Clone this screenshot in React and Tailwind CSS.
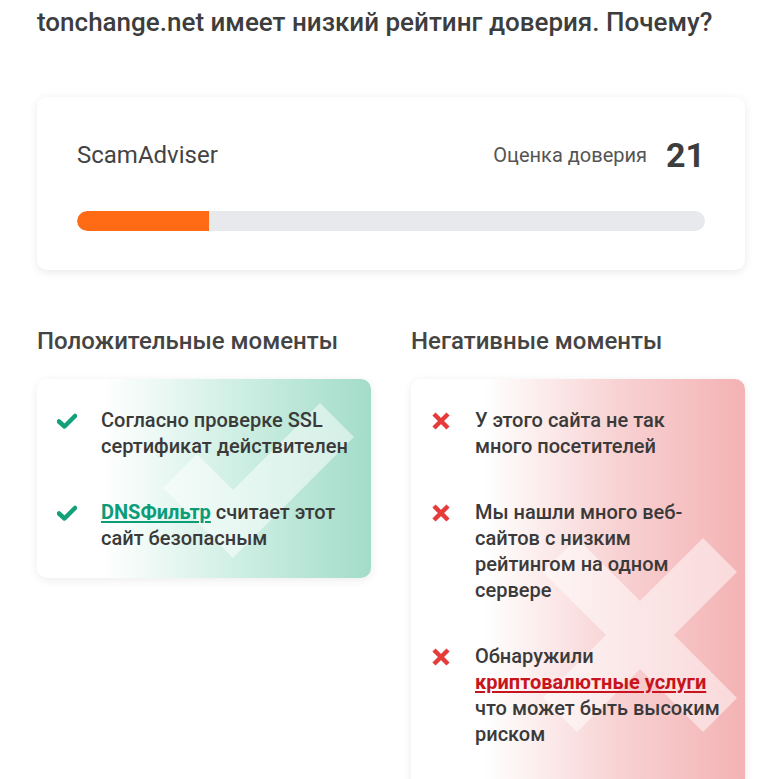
import React from 'react';

const positives = [
  { text: 'Согласно проверке SSL сертификат действителен' },
  { link: 'DNSФильтр', text: ' считает этот сайт безопасным' },
];

const negatives = [
  { text: 'У этого сайта не так много посетителей' },
  { text: 'Мы нашли много веб-сайтов с низким рейтингом на одном сервере' },
  { before: 'Обнаружили ', link: 'криптовалютные услуги', text: ' что может быть высоким риском' },
];

const CheckIcon = () => (
  <svg viewBox="0 0 20 16" className="w-[20px] h-[16px] mt-[6px] shrink-0">
    <path d="M2 8.5 L7.5 13.5 L18 3" fill="none" stroke="#14a078" strokeWidth="4.5" strokeLinecap="round" strokeLinejoin="round" />
  </svg>
);

const CrossIcon = () => (
  <svg viewBox="0 0 20 20" className="w-[20px] h-[20px] mt-[4px] shrink-0">
    <path d="M3 3 L17 17 M17 3 L3 17" fill="none" stroke="#e53b3b" strokeWidth="4.5" />
  </svg>
);

export default function App() {
  return (
    <div className="min-h-screen bg-white px-[37px] pt-[4px] text-[#3a3a3a]" style={{ fontFamily: 'Roboto, "Liberation Sans", sans-serif' }}>
      <h1 className="text-[26px] leading-[36px] font-medium text-[#3d3d3d]">
        tonchange.net имеет низкий рейтинг доверия. Почему?
      </h1>

      {/* trust score card */}
      <div className="mt-[57px] w-[708px] rounded-[10px] bg-white shadow-[0_2px_10px_rgba(0,0,0,0.09)] px-[40px] pt-[39px] pb-[39px]">
        <div className="flex items-center justify-between h-[38px]">
          <span className="text-[24px] text-[#444]">ScamAdviser</span>
          <div className="flex items-center">
            <span className="text-[20px] text-[#555]">Оценка доверия</span>
            <span className="ml-[19px] mr-0 text-[34px] font-bold text-[#3d3d3d]">21</span>
          </div>
        </div>
        <div className="mt-[37px] h-[20px] w-full rounded-full bg-[#e8e9ec] overflow-hidden">
          <div className="h-full bg-[#ff6a14] rounded-l-full" style={{ width: '21%' }} />
        </div>
      </div>

      <div className="mt-[55px] grid grid-cols-2 gap-[40px] w-[708px]">
        <div>
          <h2 className="text-[24px] leading-[32px] font-medium text-[#444]">Положительные моменты</h2>
          <div className="relative mt-[22px] overflow-hidden rounded-[10px] shadow-[0_2px_10px_rgba(0,0,0,0.08)] bg-[linear-gradient(90deg,#ffffff_20%,#c9ede0_65%,#a3dcc9_100%)] pl-[20px] pr-[20px] pt-[28px] pb-[27px]">
            {/* faded check mark behind the list */}
            <svg width="334" height="220" className="absolute left-0 top-0 pointer-events-none">
              <path d="M143 92 L196 145 L300 41" fill="none" stroke="#ffffff" strokeOpacity="0.5" strokeWidth="48" strokeLinejoin="miter" />
            </svg>
            <ul className="relative flex flex-col gap-[40px]">
              {positives.map((p, i) => (
                <li key={i} className="flex gap-[24px]">
                  <CheckIcon />
                  <p className="text-[20px] leading-[26px] font-medium text-[#3a3a3a]">
                    {p.link && <a className="font-bold text-[#0b9c78] underline underline-offset-2">{p.link}</a>}
                    {p.text}
                  </p>
                </li>
              ))}
            </ul>
          </div>
        </div>

        <div>
          <h2 className="text-[24px] leading-[32px] font-medium text-[#444]">Негативные моменты</h2>
          <div className="relative mt-[22px] overflow-hidden rounded-[10px] shadow-[0_2px_10px_rgba(0,0,0,0.08)] bg-[linear-gradient(90deg,#ffffff_22%,#f8d2d3_62%,#f4b2b4_100%)] pl-[20px] pr-[25px] pt-[28px] pb-[50px]">
            {/* faded cross behind the list */}
            <svg width="334" height="420" className="absolute left-0 top-0 pointer-events-none">
              <path d="M149 176 L309 336 M309 176 L149 336" fill="none" stroke="#ffffff" strokeOpacity="0.5" strokeWidth="48" />
            </svg>
            <ul className="relative flex flex-col gap-[40px]">
              {negatives.map((n, i) => (
                <li key={i} className="flex gap-[24px]">
                  <CrossIcon />
                  <p className="text-[20px] leading-[26px] font-medium text-[#3a3a3a]">
                    {n.before}
                    {n.link && <a className="font-bold text-[#c8141c] underline underline-offset-2">{n.link}</a>}
                    {n.text}
                  </p>
                </li>
              ))}
            </ul>
          </div>
        </div>
      </div>
    </div>
  );
}
